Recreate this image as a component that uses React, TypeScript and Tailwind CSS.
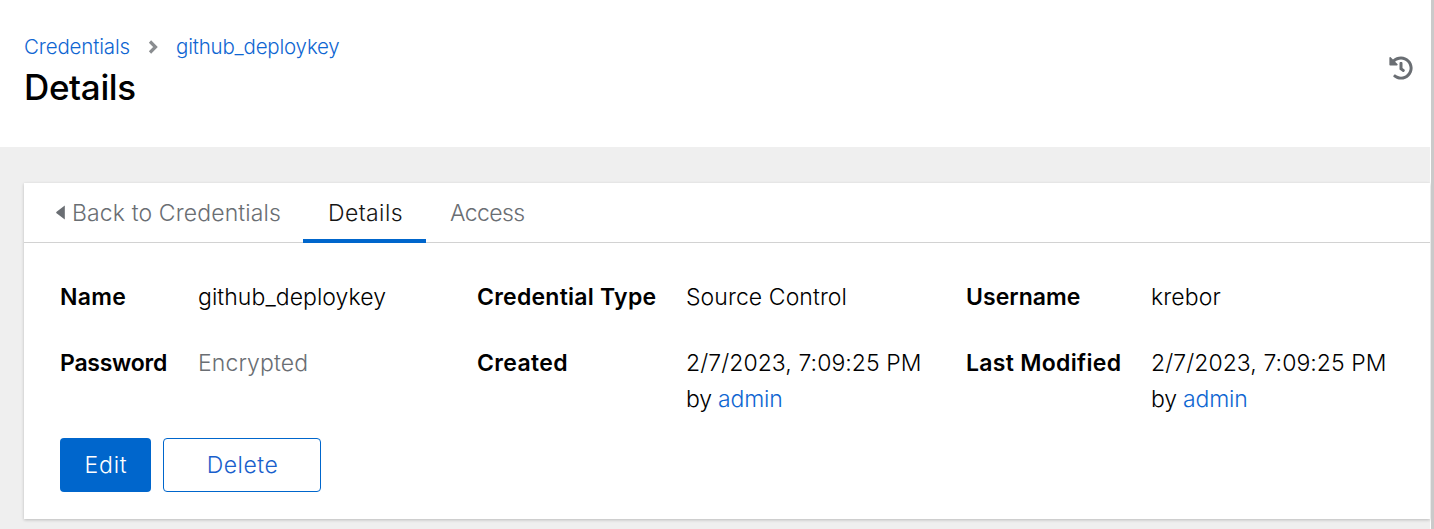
import React from 'react';

const link = 'text-[#0f66d2]';

function Term({ children, className = '' }: { children: React.ReactNode; className?: string }) {
  return <dt className={`whitespace-nowrap font-semibold ${className}`}>{children}</dt>;
}

function Value({ children, className = '' }: { children: React.ReactNode; className?: string }) {
  return <dd className={`whitespace-nowrap font-light ${className}`}>{children}</dd>;
}

function Stamp() {
  return (
    <Value>
      <p className="tracking-[0.06px]">2/7/2023, 7:09:25 PM</p>
      <p className="tracking-[-0.2px]">by <a className={link}>admin</a></p>
    </Value>
  );
}

export default function App() {
  return (
    <div className="flex h-[529px] w-[1434px] overflow-hidden bg-white text-black [font-family:Inter,'Liberation_Sans',sans-serif]">
      <div className="flex w-[1430px] flex-col">
        <header className="flex h-[147px] shrink-0 items-start justify-between bg-white pl-6 pr-[17px]">
          <div className="pt-[31px]">
            <nav className="flex h-8 items-center text-[20.5px] font-[350] leading-8">
              <a className={`w-[107px] whitespace-nowrap tracking-[-0.15px] ${link}`}>Credentials</a>
              <svg className="ml-[17px] mr-[18px] h-3.5 w-[11px]" viewBox="0 0 11 14" fill="none" stroke="#8a8d90" strokeWidth="3.2">
                <path d="M2 1.5 7.5 7 2 12.5" />
              </svg>
              <a className={`-ml-px whitespace-nowrap tracking-[-0.2px] ${link}`}>github_deploykey</a>
            </nav>
            <h1 className="h-[48px] text-[35px] font-[450] leading-[48px] tracking-[-0.35px]">Details</h1>
          </div>
          <svg className="mt-[56px] h-6 w-6" viewBox="0 0 512 512" fill="#6a6e73">
            <path d="M504 255.531c.253 136.64-111.18 248.372-247.82 248.468-59.015.042-113.223-20.53-155.822-54.911-11.077-8.94-11.905-25.541-1.839-35.607l11.267-11.267c8.609-8.609 22.353-9.551 31.891-1.984C173.062 425.135 212.781 440 256 440c101.705 0 184-82.311 184-184 0-101.705-82.311-184-184-184-48.814 0-93.149 18.969-126.068 49.932l50.754 50.754c10.08 10.08 2.941 27.314-11.313 27.314H24c-8.837 0-16-7.163-16-16V38.627c0-14.254 17.234-21.393 27.314-11.314l49.372 49.372C129.209 34.136 189.552 8 256 8c136.81 0 247.747 110.78 248 247.531zm-180.912 78.784 9.823-12.63c8.138-10.463 6.253-25.542-4.21-33.679L288 256.349V152c0-13.255-10.745-24-24-24h-16c-13.255 0-24 10.745-24 24v135.651l65.409 50.874c10.463 8.137 25.541 6.253 33.679-4.21z" />
          </svg>
        </header>
        <main className="grow bg-[#efefef] pl-6 pt-[36px]">
          <section className="h-[336px] bg-white shadow-[0_1px_3px_rgba(3,3,3,0.22)]">
            <div className="flex h-[60px] border-b border-[#d2d2d2] text-[23px] font-light leading-[60px] text-[#6a6e73]">
              <div className="flex w-[279px] items-center pl-8">
                <svg className="mr-[7px] h-[15px] w-[9px] shrink-0" viewBox="0 0 9 15" fill="#6a6e73">
                  <path d="M8.8 .5v14L.6 8.2a1 1 0 0 1 0-1.5z" />
                </svg>
                <span className="whitespace-nowrap tracking-[0.13px]">Back to Credentials</span>
              </div>
              <div className="h-[60px] w-[123px] border-b-4 border-[#06c] pl-[25px] tracking-[0.4px] text-[#151515]">Details</div>
              <div className="pl-6 tracking-[-0.6px]">Access</div>
            </div>
            <dl className="grid grid-cols-[138px_279px_209px_280px_185px_auto] gap-y-[30px] pl-9 pt-[36px] text-[23px] leading-9">
              <Term className="tracking-[0.25px]">Name</Term>
              <Value className="tracking-[0.06px]">github_deploykey</Value>
              <Term className="tracking-[0.25px]">Credential Type</Term>
              <Value className="tracking-[0.08px]">Source Control</Value>
              <Term className="tracking-[0.05px]">Username</Term>
              <Value className="tracking-[0.15px]">krebor</Value>
              <Term className="tracking-[-0.25px]">Password</Term>
              <Value className="tracking-[0.1px] text-[#6a6e73]">Encrypted</Value>
              <Term className="tracking-[0.35px]">Created</Term>
              <Stamp />
              <Term className="tracking-[0.3px]">Last Modified</Term>
              <Stamp />
            </dl>
            <div className="mt-[21px] flex gap-3 pl-9 text-[23px] font-light">
              <button className="flex h-[54px] w-[91px] items-center justify-center rounded-[4px] bg-[#06c] pl-px tracking-[0.8px] text-white">Edit</button>
              <button className="flex h-[54px] w-[158px] items-center justify-center rounded-[4px] border border-[#06c] pl-px tracking-[0.5px] text-[#1a5fcc]">Delete</button>
            </div>
          </section>
        </main>
      </div>
      <div className="ml-px w-[3px] bg-[#cacaca]" />
    </div>
  );
}
